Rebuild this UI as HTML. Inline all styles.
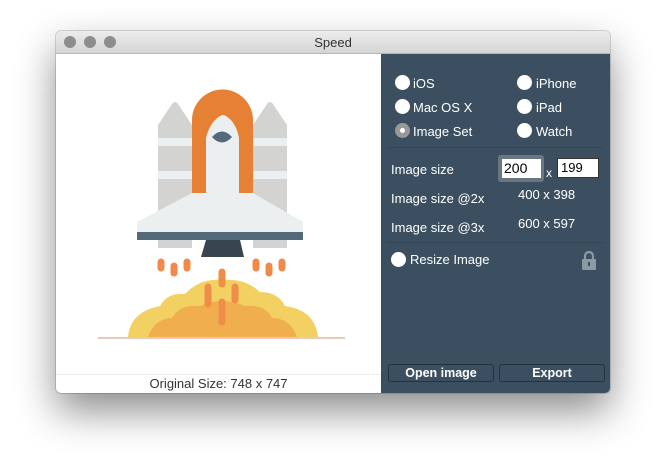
<!DOCTYPE html>
<html><head><style>
body{margin:0;width:666px;height:474px;background:#fff;position:relative;overflow:hidden;font-family:"Liberation Sans",sans-serif;}
.win{position:absolute;left:56px;top:31px;width:554px;height:362px;border-radius:5px;overflow:hidden;box-shadow:0 18px 40px rgba(0,0,0,0.45),0 0 0 1px rgba(0,0,0,0.15);background:#fff}
.title{position:absolute;left:0;top:0;width:554px;height:22px;background:linear-gradient(#ececec,#d6d6d6);border-bottom:1px solid #b5b5b5;text-align:center;font-size:13px;line-height:23px;color:#333}
.dot{position:absolute;top:5px;width:12px;height:12px;border-radius:50%;background:#8e8e8e}
.panel{position:absolute;left:325px;top:23px;width:229px;height:339px;background:#3c4f60;color:#fff;font-size:13px}
.t{position:absolute;white-space:nowrap}
.r{position:absolute;width:15px;height:15px;border-radius:50%;background:#fff}
.hr{position:absolute;left:6px;width:216px;height:1px;background:#33475a}
.btn{position:absolute;top:310px;height:16px;border:1px solid #243240;border-radius:3px;background:#3c4f60;font-weight:bold;text-align:center;line-height:16px;font-size:12.5px}
</style></head><body>
<div class="win">
<div class="title">Speed<div class="dot" style="left:8px"></div><div class="dot" style="left:28px"></div><div class="dot" style="left:48px"></div></div>
<svg style="position:absolute;left:-56px;top:-31px" width="666" height="474">
<path d="M158 248 V125 L172 104 Q175 100 178 104 L192 125 V248Z" fill="#d3d4d2"/>
<path d="M253 248 V125 L267 104 Q270 100 273 104 L287 125 V248Z" fill="#d3d4d2"/>
<rect x="158" y="138" width="34" height="8" fill="#ecefef"/><rect x="253" y="138" width="34" height="8" fill="#ecefef"/>
<rect x="158" y="171" width="34" height="8" fill="#ecefef"/><rect x="253" y="171" width="34" height="8" fill="#ecefef"/>
<path d="M192 200 V120 A30.5 30.5 0 0 1 253 120 V200Z" fill="#e58034"/>
<path d="M206 200 V138 Q210 122 220 116 Q223 114 226 116 Q236 122 239 138 V200Z" fill="#ecefef"/>
<path d="M137 222 L192 193 L253 193 L303 222 V232 H137Z" fill="#ecefef"/>
<path d="M212 137 Q222 126 232 137 Q222 148 212 137Z" fill="#546a79"/>
<rect x="137" y="232" width="166" height="8" fill="#546a79"/>
<path d="M206 240 H240 L244 257 H201Z" fill="#38454f"/>
<g stroke="#f0894a" stroke-width="7" stroke-linecap="round">
<line x1="161" y1="262" x2="161" y2="268"/><line x1="174" y1="266" x2="174" y2="273"/><line x1="187" y1="262" x2="187" y2="268"/>
<line x1="256" y1="262" x2="256" y2="268"/><line x1="269" y1="266" x2="269" y2="273"/><line x1="282" y1="262" x2="282" y2="268"/></g>
<path d="M128 337 Q130 312 160 306 Q168 292 185 294 Q200 278 222 280 Q245 278 260 292 Q278 292 285 306 Q315 310 318 337Z" fill="#f2d061"/>
<path d="M148 337 Q155 318 172 318 Q180 304 200 306 Q222 296 245 306 Q265 304 272 318 Q290 318 297 337Z" fill="#f0ae4e"/>
<g stroke="#ef8e48" stroke-width="7" stroke-linecap="round">
<line x1="222" y1="272" x2="222" y2="284"/><line x1="208" y1="287" x2="208" y2="304"/><line x1="235" y1="287" x2="235" y2="300"/><line x1="222" y1="302" x2="222" y2="322"/></g>
<line x1="98" y1="338" x2="345" y2="338" stroke="#e0b9a4" stroke-width="1.5"/>
</svg>
<div style="position:absolute;left:0;top:343px;width:325px;height:1px;background:#ececec"></div>
<div class="t" style="left:0;width:325px;text-align:center;top:345px;font-size:13px;color:#333">Original Size: 748 x 747</div>
<div class="panel">
<div class="r" style="left:14px;top:21px"></div><div class="t" style="left:32px;top:22px">iOS</div>
<div class="r" style="left:136px;top:21px"></div><div class="t" style="left:155px;top:22px">iPhone</div>
<div class="r" style="left:14px;top:45px"></div><div class="t" style="left:32px;top:46px">Mac OS X</div>
<div class="r" style="left:136px;top:45px"></div><div class="t" style="left:155px;top:46px">iPad</div>
<div class="r" style="left:14px;top:69px;background:#999"><div style="position:absolute;left:5px;top:5px;width:5px;height:5px;border-radius:50%;background:#fff"></div></div><div class="t" style="left:32px;top:70px">Image Set</div>
<div class="r" style="left:136px;top:69px"></div><div class="t" style="left:155px;top:70px">Watch</div>
<div class="hr" style="top:93px"></div>
<div class="t" style="left:10px;top:108px">Image size</div>
<div style="position:absolute;left:117px;top:101px;width:46px;height:27px;border-radius:3px;background:#6a7680"></div>
<div class="t" style="left:121px;top:105px;width:39px;height:19px;background:#fff;color:#000;line-height:19px;padding-left:2px;box-sizing:border-box;font-size:14px">200</div>
<div class="t" style="left:165px;top:112px;font-size:12px">x</div>
<div class="t" style="left:176px;top:104px;width:42px;height:20px;background:#fff;color:#000;border:1px solid #333;box-sizing:border-box;line-height:18px;padding-left:3px;font-size:13px">199</div>
<div class="t" style="left:10px;top:137px">Image size @2x</div>
<div class="t" style="left:137px;top:133px">400 x 398</div>
<div class="t" style="left:10px;top:166px">Image size @3x</div>
<div class="t" style="left:137px;top:162px">600 x 597</div>
<div class="hr" style="top:188px"></div>
<div class="r" style="left:10px;top:198px"></div><div class="t" style="left:29px;top:198px">Resize Image</div>
<svg style="position:absolute;left:200px;top:197px" width="16" height="19"><path d="M4 8 V5 A4 4 0 0 1 12 5 V8" fill="none" stroke="#8d99a3" stroke-width="2.2"/><rect x="1" y="8" width="14" height="11" rx="1" fill="#8d99a3"/><rect x="7" y="11" width="2" height="4" fill="#3c4f60"/></svg>
<div class="btn" style="left:7px;width:104px">Open image</div>
<div class="btn" style="left:118px;width:104px">Export</div>
</div>
</div>
</body></html>
